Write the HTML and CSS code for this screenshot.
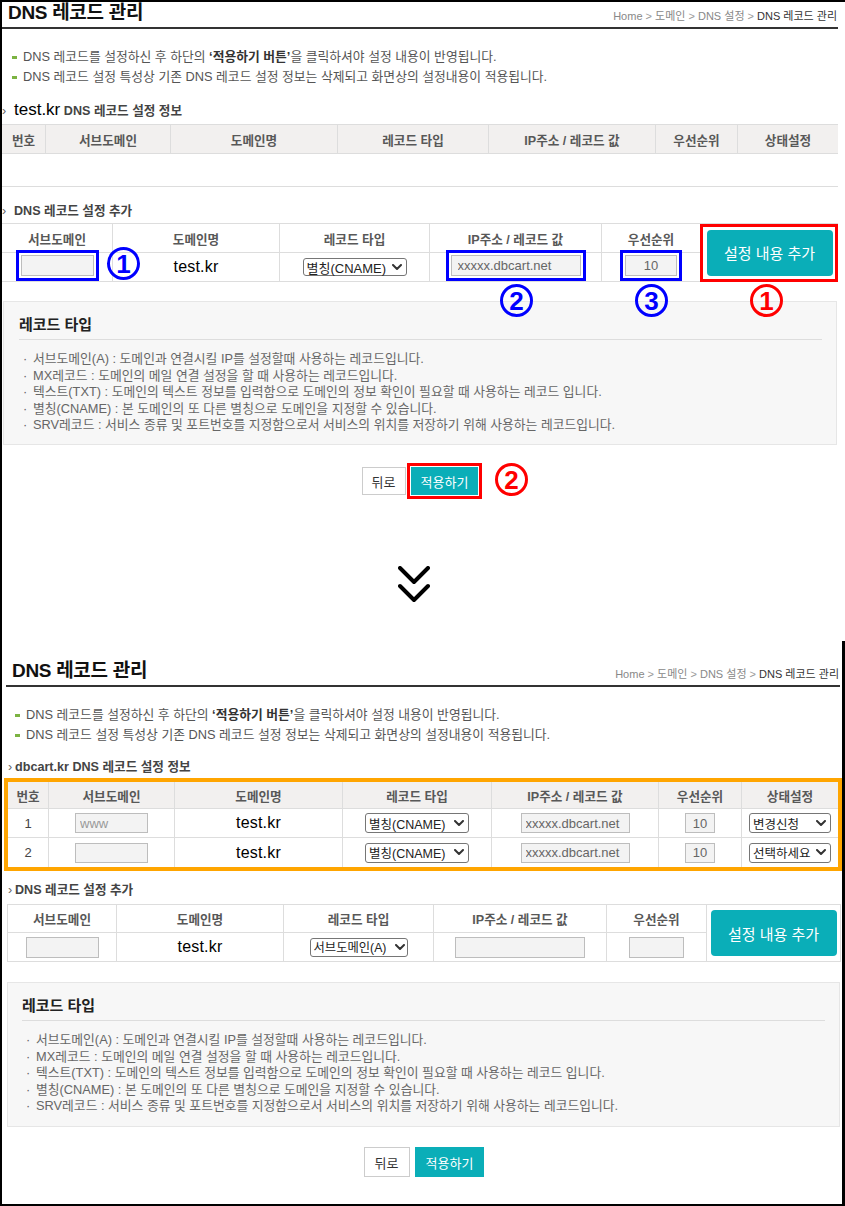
FILE: index.html
```html
<!DOCTYPE html>
<html lang="ko">
<head>
<meta charset="utf-8">
<title>DNS 레코드 관리</title>
<link rel="stylesheet" href="styles.css">
</head>
<body>
<div class="frame">

  <section class="shot shot-1">
    <header class="page-head">
      <h1 class="page-title">DNS 레코드 관리</h1>
      <nav class="crumbs">Home <span class="sep">&gt;</span> 도메인 <span class="sep">&gt;</span> DNS 설정 <span class="sep">&gt;</span> <b>DNS 레코드 관리</b></nav>
    </header>

    <ul class="notes">
      <li>DNS 레코드를 설정하신 후 하단의 <strong>‘적용하기 버튼’</strong>을 클릭하셔야 설정 내용이 반영됩니다.</li>
      <li>DNS 레코드 설정 특성상 기존 DNS 레코드 설정 정보는 삭제되고 화면상의 설정내용이 적용됩니다.</li>
    </ul>

    <h2 class="sub-head"><span class="arrow">›</span><span class="domain">test.kr</span> DNS 레코드 설정 정보</h2>
    <div class="grid grid-list cols-s1-list">
      <div class="th">번호</div>
      <div class="th">서브도메인</div>
      <div class="th">도메인명</div>
      <div class="th">레코드 타입</div>
      <div class="th">IP주소 / 레코드 값</div>
      <div class="th">우선순위</div>
      <div class="th">상태설정</div>
      <div class="empty"></div>
    </div>

    <h2 class="sub-head sub-head-add"><span class="arrow">›</span>DNS 레코드 설정 추가</h2>
    <div class="grid grid-add cols-s1-add">
      <div class="th">서브도메인</div>
      <div class="th">도메인명</div>
      <div class="th">레코드 타입</div>
      <div class="th">IP주소 / 레코드 값</div>
      <div class="th">우선순위</div>
      <div class="btn-cell hl-red"><button class="btn-add">설정 내용 추가</button></div>
      <div class="td"><span class="mark"><input class="field w-sub" value="" readonly></span></div>
      <div class="td"><span class="domain-name">test.kr</span></div>
      <div class="td"><span class="select sel-lg"><span>별칭(CNAME)</span><svg viewBox="0 0 10 7" width="10" height="7"><polyline points="1,1 5,5 9,1"/></svg></span></div>
      <div class="td"><span class="mark"><input class="field w-ip" value="xxxxx.dbcart.net" readonly></span></div>
      <div class="td"><span class="mark"><input class="field w-pri center" value="10" readonly></span></div>
    </div>

    <div class="legend legend-s1">
      <h3>레코드 타입</h3>
      <ul>
        <li>서브도메인(A) : 도메인과 연결시킬 IP를 설정할때 사용하는 레코드입니다.</li>
        <li>MX레코드 : 도메인의 메일 연결 설정을 할 때 사용하는 레코드입니다.</li>
        <li>텍스트(TXT) : 도메인의 텍스트 정보를 입력함으로 도메인의 정보 확인이 필요할 때 사용하는 레코드 입니다.</li>
        <li>별칭(CNAME) : 본 도메인의 또 다른 별칭으로 도메인을 지정할 수 있습니다.</li>
        <li>SRV레코드 : 서비스 종류 및 포트번호를 지정함으로서 서비스의 위치를 저장하기 위해 사용하는 레코드입니다.</li>
      </ul>
    </div>

    <div class="actions actions-s1">
      <button class="btn">뒤로</button>
      <button class="btn btn-primary hl-red-outline">적용하기</button>
    </div>

    <span class="callout callout-blue pos-b1">1</span>
    <span class="callout callout-blue pos-b2">2</span>
    <span class="callout callout-blue pos-b3">3</span>
    <span class="callout callout-red pos-r1">1</span>
    <span class="callout callout-red pos-r2">2</span>
  </section>

  <div class="divider">
    <svg class="chevrons" viewBox="0 0 32 38" width="32" height="38" aria-hidden="true">
      <polyline points="2,2 16,16 30,2"/>
      <polyline points="2,20 16,34 30,20"/>
    </svg>
  </div>

  <section class="shot shot-2">
    <header class="page-head page-head-s2">
      <h1 class="page-title">DNS 레코드 관리</h1>
      <nav class="crumbs">Home <span class="sep">&gt;</span> 도메인 <span class="sep">&gt;</span> DNS 설정 <span class="sep">&gt;</span> <b>DNS 레코드 관리</b></nav>
    </header>

    <ul class="notes">
      <li>DNS 레코드를 설정하신 후 하단의 <strong>‘적용하기 버튼’</strong>을 클릭하셔야 설정 내용이 반영됩니다.</li>
      <li>DNS 레코드 설정 특성상 기존 DNS 레코드 설정 정보는 삭제되고 화면상의 설정내용이 적용됩니다.</li>
    </ul>

    <h2 class="sub-head"><span class="arrow">›</span>dbcart.kr DNS 레코드 설정 정보</h2>
    <div class="hl-orange">
      <div class="grid grid-list grid-rows cols-s2-list">
        <div class="th">번호</div>
        <div class="th">서브도메인</div>
        <div class="th">도메인명</div>
        <div class="th">레코드 타입</div>
        <div class="th">IP주소 / 레코드 값</div>
        <div class="th">우선순위</div>
        <div class="th">상태설정</div>

        <div class="td num">1</div>
        <div class="td"><input class="field sm w-sub2" value="www" readonly></div>
        <div class="td"><span class="domain-name">test.kr</span></div>
        <div class="td"><span class="select sel-row"><span>별칭(CNAME)</span><svg viewBox="0 0 10 7" width="10" height="7"><polyline points="1,1 5,5 9,1"/></svg></span></div>
        <div class="td"><input class="field sm w-ip2" value="xxxxx.dbcart.net" readonly></div>
        <div class="td"><input class="field sm w-pri2 center" value="10" readonly></div>
        <div class="td"><span class="select sel-state"><span>변경신청</span><svg viewBox="0 0 10 7" width="10" height="7"><polyline points="1,1 5,5 9,1"/></svg></span></div>

        <div class="td num">2</div>
        <div class="td"><input class="field sm w-sub2" value="" readonly></div>
        <div class="td"><span class="domain-name">test.kr</span></div>
        <div class="td"><span class="select sel-row"><span>별칭(CNAME)</span><svg viewBox="0 0 10 7" width="10" height="7"><polyline points="1,1 5,5 9,1"/></svg></span></div>
        <div class="td"><input class="field sm w-ip2" value="xxxxx.dbcart.net" readonly></div>
        <div class="td"><input class="field sm w-pri2 center" value="10" readonly></div>
        <div class="td"><span class="select sel-state"><span>선택하세요</span><svg viewBox="0 0 10 7" width="10" height="7"><polyline points="1,1 5,5 9,1"/></svg></span></div>
      </div>
    </div>

    <h2 class="sub-head sub-head-add2"><span class="arrow">›</span>DNS 레코드 설정 추가</h2>
    <div class="grid grid-add grid-add2 cols-s2-add">
      <div class="th">서브도메인</div>
      <div class="th">도메인명</div>
      <div class="th">레코드 타입</div>
      <div class="th">IP주소 / 레코드 값</div>
      <div class="th">우선순위</div>
      <div class="btn-cell"><button class="btn-add">설정 내용 추가</button></div>
      <div class="td"><input class="field w-sub" value="" readonly></div>
      <div class="td"><span class="domain-name">test.kr</span></div>
      <div class="td"><span class="select sel-sub"><span>서브도메인(A)</span><svg viewBox="0 0 10 7" width="10" height="7"><polyline points="1,1 5,5 9,1"/></svg></span></div>
      <div class="td"><input class="field w-ip" value="" readonly></div>
      <div class="td"><input class="field w-pri3" value="" readonly></div>
    </div>

    <div class="legend legend-s2">
      <h3>레코드 타입</h3>
      <ul>
        <li>서브도메인(A) : 도메인과 연결시킬 IP를 설정할때 사용하는 레코드입니다.</li>
        <li>MX레코드 : 도메인의 메일 연결 설정을 할 때 사용하는 레코드입니다.</li>
        <li>텍스트(TXT) : 도메인의 텍스트 정보를 입력함으로 도메인의 정보 확인이 필요할 때 사용하는 레코드 입니다.</li>
        <li>별칭(CNAME) : 본 도메인의 또 다른 별칭으로 도메인을 지정할 수 있습니다.</li>
        <li>SRV레코드 : 서비스 종류 및 포트번호를 지정함으로서 서비스의 위치를 저장하기 위해 사용하는 레코드입니다.</li>
      </ul>
    </div>

    <div class="actions actions-s2">
      <button class="btn btn-lg">뒤로</button>
      <button class="btn btn-lg btn-primary">적용하기</button>
    </div>
  </section>

</div>
</body>
</html>
```

FILE: styles.css
```css
* { box-sizing: border-box; }

html, body {
  margin: 0;
  padding: 0;
  background: #fff;
}

body {
  font-family: "Liberation Sans", "Noto Sans CJK KR", sans-serif;
  font-size: 12px;
  color: #555;
}

.frame {
  width: 845px;
  height: 1206px;
  border: 2px solid #000;
  border-right: 0;
  display: flex;
  flex-direction: column;
  overflow: hidden;
}

.shot { position: relative; }

.shot-1 { width: 836px; flex: none; }

.shot-2 {
  flex: 1;
  margin-top: 37px;
  padding: 16px 0 0 4px;
  border-right: 3px solid #000;
}

/* ---------- page head ---------- */
.page-head {
  display: flex;
  justify-content: space-between;
  align-items: flex-end;
  height: 27px;
  border-bottom: 2px solid #333;
}

.page-head-s2 {
  height: 30px;
  margin-right: 2px;
}

.page-title {
  margin: 0 0 3px 6px;
  font-size: 19px;
  line-height: 22px;
  font-weight: bold;
  color: #111;
  letter-spacing: -0.3px;
}

.crumbs {
  margin: 0 1px 3px 0;
  font-size: 11px;
  line-height: 16px;
  color: #888;
}

.crumbs .sep { color: #999; }

.crumbs b {
  font-weight: normal;
  color: #333;
}

/* ---------- notes ---------- */
.notes {
  list-style: none;
  margin: 18px 0 0;
  padding: 0 0 0 10px;
}

.shot-2 .notes { padding-left: 9px; }

.notes li {
  font-size: 12.8px;
  line-height: 20px;
  color: #555;
}

.notes li::before {
  content: "";
  display: inline-block;
  width: 5px;
  height: 3px;
  margin-right: 6px;
  vertical-align: middle;
  background: #7cb342;
}

.notes strong { color: #333; }

/* ---------- sub heads ---------- */
.sub-head {
  margin: 13px 0 0;
  font-size: 12.6px;
  line-height: 20px;
  font-weight: bold;
  color: #444;
}

.shot-2 .sub-head { margin-top: 12px; }

.sub-head .arrow {
  display: inline-block;
  width: 12px;
  font-weight: normal;
  color: #666;
}

.shot-2 .sub-head .arrow {
  width: 7px;
  margin-left: 2px;
}

.sub-head .domain {
  font-size: 17px;
  font-weight: normal;
  color: #000;
}

.sub-head-add { margin-top: 14px; }

.shot-2 .sub-head-add2 { margin-top: 9px; }

/* ---------- grids ---------- */
.grid {
  display: grid;
  margin-top: 3px;
  border-top: 1px solid #ddd;
}

.cols-s1-list { grid-template-columns: 43px 125px 167px 151px 167px 82px 101px; }
.cols-s1-add  { grid-template-columns: 110px 167px 150px 172px 99px 138px; margin-top: 2px; }
.cols-s2-list { grid-template-columns: 40px 126px 168px 149px 167px 83px 97px; }
.cols-s2-add  { grid-template-columns: 108px 167px 150px 173px 100px 1fr; margin: 4px 1px 0 1px; }

.th, .td {
  display: flex;
  align-items: center;
  justify-content: center;
  height: 29px;
  border-bottom: 1px solid #ddd;
  border-left: 1px solid #ddd;
}

.th {
  font-size: 12.6px;
  font-weight: bold;
  color: #585858;
}

.th:first-child { border-left: 0; }

.grid-list .th { background: #f2f0ef; }

.empty {
  grid-column: 1 / -1;
  height: 33px;
  border-bottom: 1px solid #ddd;
}

.grid-add { border-right: 1px solid #ddd; }
.cols-s1-add { border-right: 0; }
.cols-s1-add .th:first-child { border-left: 0; }
.cols-s1-add .td:nth-child(7) { border-left: 0; }
.cols-s2-add { border-left: 1px solid #ddd; }
.cols-s2-add .th:first-child { border-left: 0; }
.cols-s2-add .td:nth-child(7) { border-left: 0; }
.cols-s2-add .th { height: 28px; }

.grid-rows { margin-top: 0; border-top: 0; }
.grid-rows .th { height: 27px; }
.grid-rows .td:nth-child(7n+1) { border-left: 0; }
.grid-rows .td:nth-last-child(-n+7) { border-bottom: 0; }

.num {
  font-size: 13px;
  color: #444;
}

.btn-cell {
  grid-column: 6;
  grid-row: 1 / span 2;
  display: flex;
  align-items: center;
  justify-content: center;
  border-left: 1px solid #ddd;
  border-bottom: 1px solid #ddd;
}

.btn-add {
  width: 126px;
  height: 46px;
  border: 0;
  border-radius: 4px;
  background: #0aaeb8;
  color: #fff;
  font-family: inherit;
  font-size: 15px;
}

.domain-name {
  font-size: 16px;
  color: #000;
  letter-spacing: 0.2px;
}

/* ---------- form controls ---------- */
.field {
  height: 21px;
  padding: 0 6px;
  border: 1px solid #bdbdbd;
  background: #f3f3f3;
  font-family: "Liberation Sans", "Noto Sans CJK KR", sans-serif;
  font-size: 13px;
  color: #666;
  outline: none;
}

.field.sm { height: 20px; padding: 0 4px; font-size: 13px; }
.field.center { text-align: center; padding: 0; }

.w-sub  { width: 73px; }
.w-ip   { width: 130px; }
.w-pri  { width: 52px; }
.w-sub2 { width: 73px; color: #999; }
.w-ip2  { width: 109px; }
.w-pri2 { width: 30px; }
.w-pri3 { width: 55px; }

.select {
  display: inline-flex;
  align-items: center;
  justify-content: space-between;
  height: 20px;
  padding: 0 4px 0 3px;
  border: 1px solid #767676;
  border-radius: 3px;
  background: #fff;
  color: #222;
  font-size: 12.5px;
  white-space: nowrap;
}

.select svg {
  flex: none;
  fill: none;
  stroke: #333;
  stroke-width: 2;
  stroke-linecap: round;
  stroke-linejoin: round;
}

.sel-lg { width: 104px; height: 18px; font-size: 13px; }
.sel-row { width: 104px; }
.sel-state { width: 82px; }
.sel-sub { width: 98px; height: 19px; padding-right: 2px; font-size: 12.3px; }

/* annotations */
.mark {
  display: inline-flex;
  padding: 2px;
  border: 3px solid #0000ff;
  margin-top: -3px;
}

.hl-red { outline: 3px solid #ff0000; outline-offset: -3px; }
.hl-red-outline { outline: 3px solid #ff0000; outline-offset: 1px; }

.hl-orange {
  margin: 1px 0 0 -2px;
  border: 4px solid #ffa500;
}

.callout {
  position: absolute;
  width: 33px;
  height: 33px;
  border: 3px solid currentColor;
  border-radius: 50%;
  display: flex;
  align-items: center;
  justify-content: center;
  font-family: "Liberation Sans", sans-serif;
  font-size: 26px;
  font-weight: bold;
  line-height: 1;
}

.callout span { display: inline-block; }

.callout-blue { color: #0000ff; }
.callout-red  { color: #ff0000; }

.pos-b1 { left: 105px; top: 245px; }
.pos-b2 { left: 498px; top: 282px; }
.pos-b3 { left: 633px; top: 282px; }
.pos-r1 { left: 748px; top: 282px; }
.pos-r2 { left: 493px; top: 461px; }

/* ---------- legend ---------- */
.legend {
  background: #f7f7f7;
  border: 1px solid #e6e6e6;
  padding: 13px 14px 0 15px;
}

.legend-s1 { height: 144px; margin: 19px 1px 0 1px; }
.legend-s2 { height: 145px; margin: 20px 2px 0 1px; padding-left: 14px; }

.legend h3 {
  margin: 0;
  padding-bottom: 4px;
  border-bottom: 1px solid #ddd;
  font-size: 15px;
  line-height: 20px;
  font-weight: bold;
  color: #222;
}

.legend ul {
  list-style: none;
  margin: 11px 0 0;
  padding: 0 0 0 4px;
}

.legend li {
  font-size: 12.8px;
  line-height: 16.5px;
  color: #666;
}

.legend li::before {
  content: "·";
  display: inline-block;
  width: 10px;
}

/* ---------- actions ---------- */
.actions {
  display: flex;
  justify-content: center;
  gap: 5px;
}

.actions-s1 { margin-top: 22px; }
.actions-s2 { margin-top: 20px; }

.btn {
  height: 28px;
  padding: 0 9px;
  border: 1px solid #ccc;
  background: #fff;
  color: #333;
  font-family: inherit;
  font-size: 13px;
}

.btn-lg { height: 30px; padding: 0 10px; }

.btn-primary {
  background: #0aaeb8;
  border-color: #0aaeb8;
  color: #fff;
}

/* ---------- divider ---------- */
.divider {
  flex: none;
  height: 38px;
  margin-top: 71px;
  padding-left: 396px;
}

.chevrons {
  display: block;
  fill: none;
  stroke: #000;
  stroke-width: 4;
  stroke-linecap: round;
  stroke-linejoin: round;
}
```
